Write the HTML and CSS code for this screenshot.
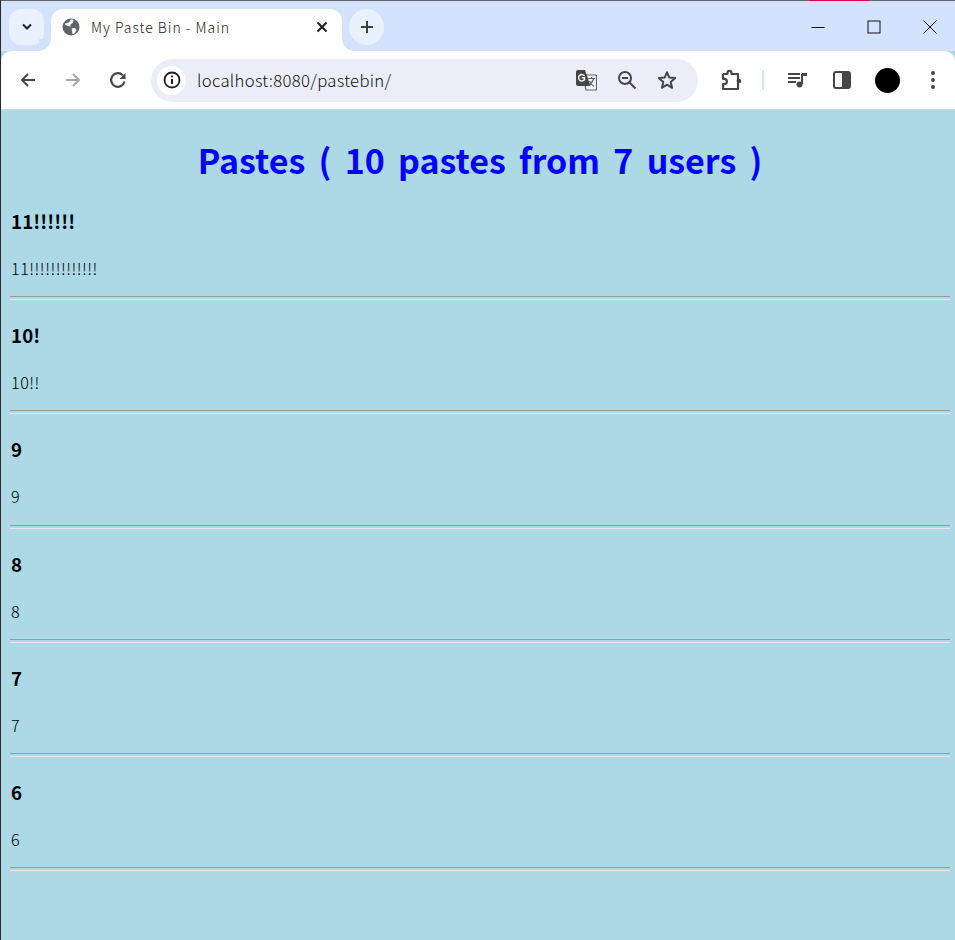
FILE: index.html
```html
<!DOCTYPE html>
<html lang="en">
<head>
<meta charset="utf-8">
<title>My Paste Bin - Main</title>
<link rel="stylesheet" href="styles.css">
</head>
<body>
<div class="window">
  <div class="topline"><span class="topline-accent"></span></div>
  <div class="tabstrip">
    <div class="tabsearch"><svg width="12" height="8" viewBox="0 0 12 8"><path d="M2 1.500 6 5.500 10 1.500" fill="none" stroke="#1f1f1f" stroke-width="2"/></svg></div>
    <div class="tab">
      <svg class="favicon" width="18" height="18" viewBox="0 0 18 18"><circle cx="9" cy="9" r="8.500" fill="#5f6368"/><path d="M3 5.500 7 4.500 8.500 1.500 11.500 1.500 11 4.500 8.500 6.500 8.500 8.500 5.500 8 3 6.500ZM9.500 10.500 13 10 14.500 12 12.500 15.500 10.500 16 10 13Z" fill="#fff"/></svg>
      <span class="tabtitle">My Paste Bin - Main</span>
      <svg class="tabclose" width="12" height="12" viewBox="0 0 12 12"><path d="M1.500 1.500 10.500 10.500M10.500 1.500 1.500 10.500" stroke="#1f1f1f" stroke-width="2"/></svg>
    </div>
    <div class="newtab"><svg width="14" height="14" viewBox="0 0 14 14"><path d="M7 1V13M1 7H13" stroke="#3c4043" stroke-width="2"/></svg></div>
    <div class="winctrls">
      <svg width="14" height="14" viewBox="0 0 14 14"><path d="M0.500 7.500H13.500" stroke="#111" stroke-width="1"/></svg>
      <svg width="14" height="14" viewBox="0 0 14 14"><rect x="1" y="1" width="12" height="12" fill="none" stroke="#111" stroke-width="1"/></svg>
      <svg width="14" height="14" viewBox="0 0 14 14"><path d="M0.500 0.500 13.500 13.500M13.500 0.500 0.500 13.500" stroke="#111" stroke-width="1"/></svg>
    </div>
  </div>
  <div class="toolbar">
    <div class="navs">
      <svg width="18" height="18" viewBox="0 0 18 18"><path d="M16 9H3M9 3 3 9 9 15" fill="none" stroke="#444746" stroke-width="2"/></svg>
      <svg width="18" height="18" viewBox="0 0 18 18"><path d="M2 9H15M9 3 15 9 9 15" fill="none" stroke="#a8a8a8" stroke-width="2"/></svg>
      <svg width="18" height="18" viewBox="0 0 18 18"><path d="M15.500 10.500A6.800 6.800 0 1 1 13.800 4.300" fill="none" stroke="#444746" stroke-width="2.200"/><path d="M10.500 8H16.500V2Z" fill="#444746"/></svg>
    </div>
    <div class="omnibox">
      <div class="infochip"><svg width="18" height="18" viewBox="0 0 18 18"><circle cx="9" cy="9" r="7.500" fill="none" stroke="#1f1f1f" stroke-width="1.800"/><path d="M9 8V13" stroke="#1f1f1f" stroke-width="2"/><circle cx="9" cy="5.500" r="1.100" fill="#1f1f1f"/></svg></div>
      <span class="url">localhost:8080/pastebin/</span>
      <div class="omni-icons">
        <svg width="22" height="22" viewBox="0 0 22 22"><path d="M8 6H20.500A1 1 0 0 1 21.500 7V20A1 1 0 0 1 20.500 21H11Z" fill="#f4f5f8" stroke="#5f6368" stroke-width="1.200"/><path d="M1 3a2 2 0 0 1 2-2H10L15.500 17H3a2 2 0 0 1-2-2Z" fill="#444746"/><path d="M13 9.500H20M16.500 8V9.500M18.500 10C17.500 13 15.500 15.500 13.500 17M14.500 12C15.500 14.500 17 16 19 17.500" fill="none" stroke="#5f6368" stroke-width="1.200"/><path d="M9.500 7A3.200 3.200 0 1 0 9.500 10.500V8.800H6.800" fill="none" stroke="#fff" stroke-width="1.400"/></svg>
        <svg width="20" height="20" viewBox="0 0 20 20"><circle cx="8" cy="8" r="6" fill="none" stroke="#444746" stroke-width="2"/><path d="M5 8H11" stroke="#444746" stroke-width="2"/><path d="M12.500 12.500 18.500 18.500" stroke="#444746" stroke-width="2"/></svg>
        <svg width="20" height="20" viewBox="0 0 20 20"><path d="M10 2.200 12.300 7.600 18.200 8.100 13.700 12 15.100 17.800 10 14.700 4.900 17.800 6.300 12 1.800 8.100 7.700 7.600Z" fill="none" stroke="#444746" stroke-width="2" stroke-linejoin="round"/></svg>
      </div>
    </div>
    <div class="tools">
      <svg class="tool-ext" width="22" height="22" viewBox="0 0 22 22"><path d="M3 5H7.500V3.800A2 2 0 0 1 11.500 3.800V5H18V9" fill="none" stroke="#444746" stroke-width="2.200" stroke-linejoin="round"/><path d="M18 9V19.500A.8.800 0 0 1 17.200 20H3.800A.8.800 0 0 1 3 19.500V15.200H4.200A2.700 2.700 0 0 0 4.200 9.800H3V5" fill="none" stroke="#444746" stroke-width="2.200" stroke-linejoin="round"/><circle cx="19" cy="12" r="2.300" fill="#444746"/></svg>
      <span class="tool-sep"></span>
      <svg class="tool-media" width="20" height="18" viewBox="0 0 20 18"><path d="M0 3H12M0 7H12M0 11H8" stroke="#444746" stroke-width="2"/><path d="M14 3V13" stroke="#444746" stroke-width="2"/><path d="M14 2H19V5H14Z" fill="#444746"/><circle cx="11.500" cy="13.500" r="3" fill="#444746"/></svg>
      <svg class="tool-side" width="18" height="18" viewBox="0 0 18 18"><rect x="1" y="1" width="16" height="16" rx="2" fill="none" stroke="#444746" stroke-width="2"/><rect x="9" y="1" width="8" height="16" fill="#444746"/></svg>
      <span class="avatar"></span>
      <svg class="tool-menu" width="6" height="20" viewBox="0 0 6 20"><circle cx="3" cy="3" r="2" fill="#444746"/><circle cx="3" cy="10" r="2" fill="#444746"/><circle cx="3" cy="17" r="2" fill="#444746"/></svg>
    </div>
  </div>
  <main class="page">
    <h1 class="heading">Pastes ( 10 pastes from 7 users )</h1>
    <article class="paste"><h3 class="paste-title">11!!!!!!</h3><p class="paste-body">11!!!!!!!!!!!!!</p></article>
    <article class="paste"><h3 class="paste-title">10!</h3><p class="paste-body">10!!</p></article>
    <article class="paste"><h3 class="paste-title">9</h3><p class="paste-body">9</p></article>
    <article class="paste"><h3 class="paste-title">8</h3><p class="paste-body">8</p></article>
    <article class="paste"><h3 class="paste-title">7</h3><p class="paste-body">7</p></article>
    <article class="paste"><h3 class="paste-title">6</h3><p class="paste-body">6</p></article>
  </main>
</div>
</body>
</html>
```
FILE: styles.css
```css
* { box-sizing: border-box; }
html, body { margin: 0; padding: 0; height: 100%; overflow: hidden; }
body { font-family: "Noto Sans CJK KR", "Noto Sans", sans-serif; background: #add8e6; }
.window { display: flex; flex-direction: column; height: 940px; border-left: 1px solid #2a2a2a; }
.topline { display: flex; height: 1px; background: #62656b; justify-content: flex-end; flex: none; }
.topline-accent { width: 60px; background: #e0004d; margin-right: 86px; }
.tabstrip { display: flex; align-items: flex-start; height: 50px; background: #d3e3fd; flex: none; position: relative; }
.tabsearch { width: 35px; height: 36px; margin: 8px 0 0 8px; border-radius: 12px; background: #e9f0fe; display: flex; align-items: center; justify-content: center; }
.tab { width: 291px; height: 42px; margin: 8px 0 0 7px; background: #fff; border-radius: 12px 12px 0 0; display: flex; align-items: center; padding: 0 14px 6px 11px; position: relative; }
.tab::before, .tab::after { content: ""; position: absolute; bottom: 0; width: 12px; height: 12px; }
.tab::before { left: -12px; background: radial-gradient(circle at 0 0, #d3e3fd 11.500px, #fff 12px); }
.tab::after { right: -12px; background: radial-gradient(circle at 100% 0, #d3e3fd 11.500px, #fff 12px); }
.favicon { flex: none; }
.tabtitle { font-size: 14px; font-weight: 300; color: #222; margin-left: 11px; flex: 1; letter-spacing: 1px; }
.tabclose { flex: none; }
.newtab { width: 35px; height: 36px; margin: 8px 0 0 7px; border-radius: 50%; background: #e9f0fe; display: flex; align-items: center; justify-content: center; }
.winctrls { display: flex; gap: 42px; margin: 19px 18px 0 auto; }
.toolbar { display: flex; align-items: center; height: 59px; background: #fff; border-radius: 10px 10px 0 0; flex: none; border-bottom: 1px solid #c5dde8; position: relative; }
.navs { display: flex; gap: 27px; margin-left: 18px; }
.omnibox { display: flex; align-items: center; width: 547px; height: 43px; margin-left: 24px; border-radius: 22px; background: #ebeef8; }
.infochip { width: 29px; height: 29px; margin-left: 6px; border-radius: 50%; background: #fff; display: flex; align-items: center; justify-content: center; }
.url { font-size: 16.700px; font-weight: 300; color: #111; margin-left: 11px; flex: 1; letter-spacing: 0.3px; }
.omni-icons { display: flex; align-items: center; gap: 20px; margin-right: 21px; }
.tools { display: flex; align-items: center; margin-left: 22px; }
.tool-sep { width: 2px; height: 20px; background: #d3e3fd; margin-left: 20px; }
.tool-media { margin-left: 24px; }
.tool-side { margin-left: 25px; }
.avatar { width: 25px; height: 25px; border-radius: 50%; background: #000; margin-left: 24px; }
.tool-menu { margin-left: 30px; }
.page { flex: 1; background: #add8e6; padding: 0 5px 0 9px; }
.heading { margin: 0; height: 76px; padding-top: 25px; text-align: center; color: #0000ff; font-size: 34px; font-weight: 700; line-height: 50px; word-spacing: 5.500px; }
.paste { display: flex; flex-direction: column; height: 114.200px; }
.paste::after { content: ""; display: block; height: 2px; margin-top: auto; border-top: 1px solid #9a9a9a; border-bottom: 1px solid #e8e8e8; }
.paste-title { margin: 0; font-size: 18.720px; font-weight: 700; line-height: 27px; padding: 21px 0 0 1px; color: #000; letter-spacing: 0.1px; }
.paste-body { margin: 0; font-size: 16.200px; font-weight: 300; line-height: 24px; padding: 22px 0 0 1px; color: #000; letter-spacing: 0.500px; }
```
